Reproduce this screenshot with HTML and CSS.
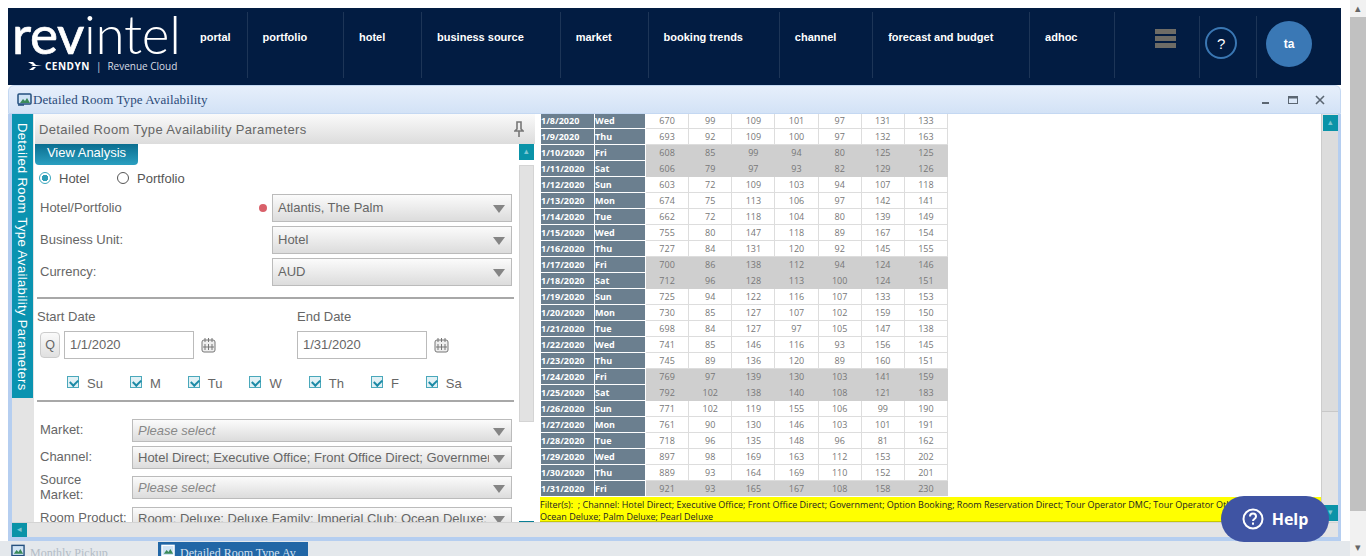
FILE: index.html
```html
<!DOCTYPE html>
<html lang="en">
<head>
    <meta charset="UTF-8">
    <title>Detailed Room Type Availability</title>
    <link rel="stylesheet" href="styles.css">
</head>
<body>
<div class="page">
    <div class="main">
        <div class="top">
            <header class="header">
                <div class="logo">
                    <div class="logo-word"><b>rev</b>intel</div>
                    <div class="logo-sub">
                        <svg width="14" height="10" viewBox="0 0 14 10"><path d="M0 1h5l3 3h6l-6 1H3l2-1zM1 9h4l3-3h-3z" fill="#fff"/></svg>
                        <b>CENDYN</b><span class="logo-bar">|</span><span>Revenue Cloud</span>
                    </div>
                </div>
                <nav class="nav">
                    <a>portal</a><a>portfolio</a><a>hotel</a><a>business source</a><a>market</a><a>booking trends</a><a>channel</a><a>forecast and budget</a><a>adhoc</a>
                </nav>
                <div class="head-cell menu-cell"><div class="burger"><i></i><i></i><i></i></div></div>
                <div class="head-cell help-cell"><div class="q-circle">?</div></div>
                <div class="head-cell user-cell"><div class="avatar">ta</div></div>
            </header>

            <section class="window">
                <div class="titlebar">
                    <svg class="win-icon" width="15" height="13" viewBox="0 0 15 13"><rect x="1" y="1" width="13" height="10" rx="1" fill="#cfe3f5" stroke="#24507f" stroke-width="1.5"/><path d="M3 10l3-4 2 2 2-3 3 5z" fill="#3b8a5a"/><path d="M1 12h6" stroke="#24507f" stroke-width="1.5"/></svg>
                    <span class="win-title">Detailed Room Type Availability</span>
                    <div class="win-btns">
                        <svg width="10" height="10" viewBox="0 0 10 10"><rect x="1" y="7" width="7" height="2" fill="#5b6672"/></svg>
                        <svg width="10" height="10" viewBox="0 0 10 10"><rect x="0.5" y="1.5" width="9" height="7" fill="none" stroke="#5b6672"/><rect y="1" width="10" height="2.5" fill="#5b6672"/></svg>
                        <svg width="10" height="10" viewBox="0 0 10 10"><path d="M1 1l8 8M9 1l-8 8" stroke="#5b6672" stroke-width="1.6"/></svg>
                    </div>
                </div>

                <div class="win-body">
                    <div class="panes">
                        <aside class="rail">
                            <div class="rail-tab"><span>Detailed Room Type Availability Parameters</span></div>
                        </aside>

                        <div class="params">
                            <div class="params-head">
                                <span>Detailed Room Type Availability Parameters</span>
                                <svg width="10" height="16" viewBox="0 0 10 16"><path d="M3 1h4v7l2 2H1l2-2zM5 10v6" fill="none" stroke="#777" stroke-width="1.6"/></svg>
                            </div>
                            <div class="params-body">
                                <div class="form">
                                    <button class="view-btn">View Analysis</button>
                                    <div class="radios">
                                        <label class="radio-item"><i class="radio on"></i>Hotel</label>
                                        <label class="radio-item"><i class="radio"></i>Portfolio</label>
                                    </div>
                                    <div class="field">
                                        <label>Hotel/Portfolio</label><i class="req"></i>
                                        <div class="select">Atlantis, The Palm</div>
                                    </div>
                                    <div class="field">
                                        <label>Business Unit:</label>
                                        <div class="select">Hotel</div>
                                    </div>
                                    <div class="field">
                                        <label>Currency:</label>
                                        <div class="select">AUD</div>
                                    </div>
                                    <hr class="rule">
                                    <div class="dates">
                                        <div class="date-col">
                                            <div class="date-label">Start Date</div>
                                            <div class="date-row">
                                                <button class="q-btn">Q</button>
                                                <div class="date-input">1/1/2020</div>
                                                <svg class="cal" width="15" height="15" viewBox="0 0 15 15"><rect x="1" y="2" width="13" height="12" rx="2" fill="#eee" stroke="#777"/><path d="M4 0v4M7.500 0v4M11 0v4M4 6v6M7.500 6v6M11 6v6M2 9h11" stroke="#777"/></svg>
                                            </div>
                                        </div>
                                        <div class="date-col">
                                            <div class="date-label">End Date</div>
                                            <div class="date-row">
                                                <div class="date-input">1/31/2020</div>
                                                <svg class="cal" width="15" height="15" viewBox="0 0 15 15"><rect x="1" y="2" width="13" height="12" rx="2" fill="#eee" stroke="#777"/><path d="M4 0v4M7.500 0v4M11 0v4M4 6v6M7.500 6v6M11 6v6M2 9h11" stroke="#777"/></svg>
                                            </div>
                                        </div>
                                    </div>
                                    <div class="days">
                                        <label class="day"><i class="check"></i>Su</label>
                                        <label class="day"><i class="check"></i>M</label>
                                        <label class="day"><i class="check"></i>Tu</label>
                                        <label class="day"><i class="check"></i>W</label>
                                        <label class="day"><i class="check"></i>Th</label>
                                        <label class="day"><i class="check"></i>F</label>
                                        <label class="day"><i class="check"></i>Sa</label>
                                    </div>
                                    <hr class="rule rule-days">
                                    <div class="small-field market-field">
                                        <label>Market:</label>
                                        <div class="select select-sm empty">Please select</div>
                                    </div>
                                    <div class="small-field">
                                        <label>Channel:</label>
                                        <div class="select select-sm"><span class="clip">Hotel Direct; Executive Office; Front Office Direct; Government; Option Booking</span></div>
                                    </div>
                                    <div class="small-field source-field">
                                        <label>Source<br>Market:</label>
                                        <div class="select select-sm empty">Please select</div>
                                    </div>
                                    <div class="small-field room-field">
                                        <label>Room Product:</label>
                                        <div class="select select-sm"><span class="clip">Room: Deluxe; Deluxe Family; Imperial Club; Ocean Deluxe; Palm Deluxe</span></div>
                                    </div>
                                </div>
                                <div class="form-scroll">
                                    <div class="teal-btn">&#9652;</div>
                                    <div class="form-thumb"></div>
                                    <div class="form-scroll-end"></div>
                                </div>
                            </div>
                        </div>

                        <div class="results">
                            <div class="results-main">
                                <div class="table-wrap">
                                    <table class="grid">
                                        <tr><th>1/8/2020</th><th>Wed</th><td>670</td><td>99</td><td>109</td><td>101</td><td>97</td><td>131</td><td>133</td></tr>
                                        <tr><th>1/9/2020</th><th>Thu</th><td>693</td><td>92</td><td>109</td><td>100</td><td>97</td><td>132</td><td>163</td></tr>
                                        <tr class="wknd"><th>1/10/2020</th><th>Fri</th><td>608</td><td>85</td><td>99</td><td>94</td><td>80</td><td>125</td><td>125</td></tr>
                                        <tr class="wknd"><th>1/11/2020</th><th>Sat</th><td>606</td><td>79</td><td>97</td><td>93</td><td>82</td><td>129</td><td>126</td></tr>
                                        <tr><th>1/12/2020</th><th>Sun</th><td>603</td><td>72</td><td>109</td><td>103</td><td>94</td><td>107</td><td>118</td></tr>
                                        <tr><th>1/13/2020</th><th>Mon</th><td>674</td><td>75</td><td>113</td><td>106</td><td>97</td><td>142</td><td>141</td></tr>
                                        <tr><th>1/14/2020</th><th>Tue</th><td>662</td><td>72</td><td>118</td><td>104</td><td>80</td><td>139</td><td>149</td></tr>
                                        <tr><th>1/15/2020</th><th>Wed</th><td>755</td><td>80</td><td>147</td><td>118</td><td>89</td><td>167</td><td>154</td></tr>
                                        <tr><th>1/16/2020</th><th>Thu</th><td>727</td><td>84</td><td>131</td><td>120</td><td>92</td><td>145</td><td>155</td></tr>
                                        <tr class="wknd"><th>1/17/2020</th><th>Fri</th><td>700</td><td>86</td><td>138</td><td>112</td><td>94</td><td>124</td><td>146</td></tr>
                                        <tr class="wknd"><th>1/18/2020</th><th>Sat</th><td>712</td><td>96</td><td>128</td><td>113</td><td>100</td><td>124</td><td>151</td></tr>
                                        <tr><th>1/19/2020</th><th>Sun</th><td>725</td><td>94</td><td>122</td><td>116</td><td>107</td><td>133</td><td>153</td></tr>
                                        <tr><th>1/20/2020</th><th>Mon</th><td>730</td><td>85</td><td>127</td><td>107</td><td>102</td><td>159</td><td>150</td></tr>
                                        <tr><th>1/21/2020</th><th>Tue</th><td>698</td><td>84</td><td>127</td><td>97</td><td>105</td><td>147</td><td>138</td></tr>
                                        <tr><th>1/22/2020</th><th>Wed</th><td>741</td><td>85</td><td>146</td><td>116</td><td>93</td><td>156</td><td>145</td></tr>
                                        <tr><th>1/23/2020</th><th>Thu</th><td>745</td><td>89</td><td>136</td><td>120</td><td>89</td><td>160</td><td>151</td></tr>
                                        <tr class="wknd"><th>1/24/2020</th><th>Fri</th><td>769</td><td>97</td><td>139</td><td>130</td><td>103</td><td>141</td><td>159</td></tr>
                                        <tr class="wknd"><th>1/25/2020</th><th>Sat</th><td>792</td><td>102</td><td>138</td><td>140</td><td>108</td><td>121</td><td>183</td></tr>
                                        <tr><th>1/26/2020</th><th>Sun</th><td>771</td><td>102</td><td>119</td><td>155</td><td>106</td><td>99</td><td>190</td></tr>
                                        <tr><th>1/27/2020</th><th>Mon</th><td>761</td><td>90</td><td>130</td><td>146</td><td>103</td><td>101</td><td>191</td></tr>
                                        <tr><th>1/28/2020</th><th>Tue</th><td>718</td><td>96</td><td>135</td><td>148</td><td>96</td><td>81</td><td>162</td></tr>
                                        <tr><th>1/29/2020</th><th>Wed</th><td>897</td><td>98</td><td>169</td><td>163</td><td>112</td><td>153</td><td>202</td></tr>
                                        <tr><th>1/30/2020</th><th>Thu</th><td>889</td><td>93</td><td>164</td><td>169</td><td>110</td><td>152</td><td>201</td></tr>
                                        <tr class="wknd"><th>1/31/2020</th><th>Fri</th><td>921</td><td>93</td><td>165</td><td>167</td><td>108</td><td>158</td><td>230</td></tr>
                                    </table>
                                </div>
                                <div class="filter">Filter(s): &nbsp;; Channel: Hotel Direct; Executive Office; Front Office Direct; Government; Option Booking; Room Reservation Direct; Tour Operator DMC; Tour Operator Other<br>Ocean Deluxe; Palm Deluxe; Pearl Deluxe</div>
                            </div>
                            <div class="res-scroll">
                                <div class="teal-btn">&#9652;</div>
                                <div class="res-thumb"></div>
                                <div class="teal-btn res-down">&#9662;</div>
                            </div>
                        </div>
                    </div>
                    <div class="hbar"><div class="teal-btn">&#9666;</div></div>
                </div>
            </section>
        </div>

        <footer class="tabs">
            <div class="tab">
                <svg width="14" height="13" viewBox="0 0 15 13"><rect x="1" y="1" width="13" height="11" fill="#cfe3f5" stroke="#24507f" stroke-width="1.500"/><path d="M3 10l3-4 2 2 2-3 3 5z" fill="#3b8a5a"/></svg>
                <span>Monthly Pickup</span>
            </div>
            <div class="tab active">
                <svg width="14" height="13" viewBox="0 0 15 13"><rect x="1" y="1" width="13" height="11" fill="#cfe3f5" stroke="#fff" stroke-width="1.500"/><path d="M3 10l3-4 2 2 2-3 3 5z" fill="#3b8a5a"/></svg>
                <span>Detailed Room Type Av</span>
            </div>
        </footer>
    </div>

    <div class="page-scroll">
        <div class="page-arrow">&#9652;</div>
        <div class="page-thumb"></div>
        <div class="page-arrow">&#9662;</div>
    </div>
</div>

<div class="help-fab">
    <svg width="22" height="22" viewBox="0 0 22 22"><circle cx="11" cy="11" r="9.500" fill="none" stroke="#fff" stroke-width="2"/><path d="M8 8.500c0-4 6-4 6 0 0 2.500-3 2.500-3 4.500" fill="none" stroke="#fff" stroke-width="2"/><rect x="10" y="14.500" width="2" height="2.200" fill="#fff"/></svg>
    <span>Help</span>
</div>
</body>
</html>
```

FILE: styles.css
```css
* {
    box-sizing: border-box;
}

html, body {
    margin: 0;
    height: 100%;
    overflow: hidden;
    background: #fff;
    font-family: "Liberation Sans", Arial, sans-serif;
    color: #666;
}

.page {
    display: flex;
    height: 556px;
}

.main {
    width: 1350px;
    display: flex;
    flex-direction: column;
}

.top {
    padding: 8px 9px 0 8px;
}

/* header */
.header {
    display: flex;
    height: 77px;
    background: #021c42;
}

.logo {
    width: 176px;
    padding: 0 0 0 4px;
    color: #fff;
    flex: none;
}

.logo-word {
    font-family: "Lato", sans-serif;
    font-size: 53px;
    font-weight: 300;
    line-height: 50px;
    margin-top: 1px;
    white-space: nowrap;
    letter-spacing: -0.3px;
}

.logo-word b {
    font-weight: 400;
    -webkit-text-stroke: 0.7px #fff;
}

.logo-sub {
    display: flex;
    align-items: center;
    gap: 3px;
    margin: 0 0 0 16px;
    font-family: "Open Sans", sans-serif;
    font-size: 10px;
    white-space: nowrap;
    color: #d8dde5;
}

.logo-sub b {
    font-size: 10px;
    letter-spacing: 0.5px;
    color: #fff;
}

.logo-bar {
    margin: 0 3px;
}

.nav {
    display: flex;
    margin: 4px 0 7px 1px;
}

.nav a {
    padding: 19px 35.800px 0 15px;
    border-right: 1px solid #1d3557;
    color: #fff;
    font-size: 11px;
    font-weight: bold;
    white-space: nowrap;
}

.nav a:first-child {
    padding-right: 16px;
}

.nav a:last-child {
    width: 85px;
    padding-right: 0;
}

.head-cell {
    display: flex;
    margin: 8px 0 7px;
    border-right: 1px solid #1d3557;
}

.menu-cell {
    width: 85px;
    padding-left: 40px;
}

.help-cell {
    width: 57px;
    padding-left: 5px;
}

.user-cell {
    flex: 1;
    padding-left: 9px;
    border-right: 0;
}

.burger {
    width: 21px;
    margin-top: 13px;
    display: flex;
    flex-direction: column;
    gap: 2px;
}

.burger i {
    height: 5px;
    background: #6e6c66;
}

.q-circle {
    width: 32px;
    height: 32px;
    margin-top: 11px;
    border: 2px solid #3a77b3;
    border-radius: 50%;
    color: #fff;
    font-size: 15px;
    line-height: 29px;
    text-align: center;
}

.avatar {
    width: 46px;
    height: 46px;
    margin-top: 5px;
    border-radius: 50%;
    background: #3a78b5;
    color: #fff;
    font-size: 12px;
    font-weight: bold;
    line-height: 46px;
    text-align: center;
}

/* window */
.window {
    height: 456px;
    display: flex;
    flex-direction: column;
}

.titlebar {
    display: flex;
    align-items: center;
    height: 29px;
    flex: none;
    padding: 0 15px 0 8px;
    background: linear-gradient(#e6effb, #d3e2f6);
    border: 1px solid #c4d8f2;
    border-radius: 6px 6px 0 0;
}

.win-icon {
    flex: none;
}

.win-title {
    margin-left: 1px;
    font-family: "Liberation Serif", serif;
    font-size: 13px;
    letter-spacing: 0.1px;
    color: #2b4a78;
}

.win-btns {
    display: flex;
    gap: 17px;
    margin-left: auto;
}

.win-body {
    flex: 1;
    min-height: 0;
    display: flex;
    flex-direction: column;
    background: #e4e4e4;
    border: solid #b5cef0;
    border-width: 0 3px 4px 4px;
}

.panes {
    height: 408px;
    display: flex;
    flex: none;
}

.rail {
    width: 23px;
    flex: none;
    background: #e4e4e4;
    border-right: 1px solid #fff;
}

.rail-tab {
    height: 284px;
    padding-top: 9px;
    background: #0a93b0;
    color: #fff;
    font-size: 13px;
    letter-spacing: 0.36px;
    line-height: 21px;
    writing-mode: vertical-rl;
    white-space: nowrap;
}

/* parameters panel */
.params {
    width: 500px;
    flex: none;
    display: flex;
    flex-direction: column;
    background: #fff;
}

.params-head {
    display: flex;
    align-items: center;
    justify-content: space-between;
    height: 30px;
    flex: none;
    padding: 0 11px 0 4px;
    background: linear-gradient(#fafafa, #dcdcdc);
    font-size: 13px;
    letter-spacing: 0.36px;
    color: #666;
}

.params-body {
    flex: 1;
    min-height: 0;
    display: flex;
    overflow: hidden;
}

.form {
    width: 484px;
    flex: none;
    overflow: hidden;
}

.view-btn {
    display: block;
    width: 103px;
    height: 21px;
    padding: 0 0 5px;
    border: 0;
    border-radius: 0 0 4px 4px;
    background: linear-gradient(#0b6e90, #2a9fc0);
    color: #fff;
    font-family: inherit;
    font-size: 13px;
    font-weight: normal;
}

.radios {
    display: flex;
    height: 16px;
    margin: 5px 0 8px 4px;
    font-size: 13px;
    color: #555;
}

.radio-item {
    display: flex;
    align-items: center;
    gap: 8px;
    width: 78px;
}

.radio {
    width: 12px;
    height: 12px;
    border: 1px solid #555;
    border-radius: 50%;
    background: #fff;
}

.radio.on {
    border-color: #3aa6bd;
    background: radial-gradient(circle, #2c9db6 0 3px, #fff 3.500px);
}

.field {
    display: flex;
    align-items: center;
    height: 28px;
    margin: 0 7px 4px 5px;
    font-size: 13px;
}

.field label {
    flex: 1;
    padding-bottom: 2px;
}

.req {
    width: 8px;
    height: 8px;
    margin-right: 5px;
    border-radius: 50%;
    background: #d9606a;
}

.select {
    position: relative;
    width: 240px;
    height: 28px;
    padding: 0 30px 0 5px;
    border: 1px solid #bbb;
    background: linear-gradient(#fbfbfb, #dcdcdc);
    color: #666;
    font-size: 13px;
    line-height: 26px;
    white-space: nowrap;
}

.select::after {
    content: "";
    position: absolute;
    right: 6px;
    top: 10px;
    border: 6px solid transparent;
    border-top: 8px solid #858585;
    border-bottom: 0;
}

.rule {
    height: 2px;
    margin: 11px 5px 0 2px;
    border: 0;
    background: #a8a8a8;
}

.dates {
    display: flex;
    margin: 10px 0 0 2px;
}

.date-col {
    width: 260px;
    flex: none;
}

.date-label {
    height: 16px;
    font-size: 13px;
    line-height: 16px;
    color: #666;
}

.date-row {
    display: flex;
    align-items: center;
    margin-top: 6px;
}

.q-btn {
    width: 20px;
    height: 26px;
    margin: 0 4px 0 3px;
    padding: 0;
    border: 1px solid #ccc;
    border-radius: 4px;
    background: linear-gradient(#fafafa, #e0e0e0);
    color: #666;
    font-family: inherit;
    font-size: 12.500px;
}

.date-input {
    height: 28px;
    width: 130px;
    padding-left: 5px;
    border: 1px solid #bbb;
    color: #666;
    font-size: 13px;
    line-height: 26px;
}

.cal {
    margin-left: 7px;
}

.days {
    display: flex;
    gap: 27px;
    margin: 17px 0 0 32px;
    font-size: 13px;
    color: #666;
}

.day {
    display: flex;
    align-items: center;
    gap: 8px;
}

.check {
    position: relative;
    width: 12px;
    height: 12px;
    margin-top: -3px;
    border: 1px solid #4aa8bb;
    background: #e2f1f5;
}

.check::after {
    content: "";
    position: absolute;
    left: 3px;
    top: 1px;
    width: 4px;
    height: 6px;
    border: solid #1c8aa6;
    border-width: 0 2px 2px 0;
    transform: rotate(45deg);
}

.rule-days {
    margin-top: 9px;
}

.small-field {
    display: flex;
    align-items: center;
    height: 23px;
    margin: 4px 7px 0 5px;
    font-size: 13px;
}

.small-field label {
    width: 92px;
    flex: none;
    padding-bottom: 2px;
    line-height: 15px;
    white-space: nowrap;
}

.market-field {
    margin-top: 17px;
}

.source-field {
    margin-top: 7px;
}

.room-field {
    margin-top: 8px;
}

.select-sm {
    flex: 1;
    width: auto;
    min-width: 0;
    height: 23px;
    line-height: 21px;
    padding-right: 22px;
}

.select-sm::after {
    top: 8px;
}

.clip {
    display: block;
    overflow: hidden;
}

.empty {
    font-style: italic;
    color: #888;
}

.form-scroll {
    width: 15px;
    flex: none;
    display: flex;
    flex-direction: column;
}

.teal-btn {
    width: 15px;
    height: 16px;
    flex: none;
    background: #0a93a8;
    color: #7cc6d2;
    font-size: 9px;
    line-height: 15px;
    text-align: center;
}

.form-thumb {
    height: 257px;
    margin-top: 5px;
    background: #e2e2e2;
    border: 1px solid #d4d4d4;
}

.form-scroll-end {
    height: 1px;
    margin-top: auto;
    background: #0a7f95;
}

/* results pane */
.results {
    flex: 1;
    min-width: 0;
    display: flex;
    background: #fff;
}

.results-main {
    flex: 1;
    min-width: 0;
    display: flex;
    flex-direction: column;
    padding-left: 5px;
}

.table-wrap {
    height: 382px;
    flex: none;
    overflow: hidden;
}

.grid {
    margin-top: -2px;
    border-collapse: collapse;
    table-layout: fixed;
    width: 408px;
    font-family: "Open Sans", sans-serif;
    font-size: 9px;
}

.grid tr {
    height: 16px;
}

.grid th {
    padding: 0;
    background: #6b7f8f;
    border: 1px solid #fff;
    color: #fff;
    font-weight: bold;
    text-align: left;
    line-height: 14px;
}

.grid th:first-child {
    width: 54px;
}

.grid th:nth-child(2) {
    width: 51px;
}

.grid td {
    padding: 0;
    border: 1px solid #ddd;
    color: #777;
    text-align: center;
    line-height: 14px;
}

.wknd td {
    background: #cfcfcf;
    border-color: #cfcfcf;
}

.filter {
    height: 25px;
    margin-top: 1px;
    padding-top: 2px;
    background: #ffff00;
    color: #222;
    font-family: "Open Sans", sans-serif;
    font-size: 9px;
    line-height: 11.500px;
    white-space: nowrap;
    overflow: hidden;
    border-bottom: 1px solid #c8c800;
}

.res-scroll {
    width: 17px;
    flex: none;
    display: flex;
    flex-direction: column;
    align-items: center;
    padding-top: 1px;
    background: #e4e4e4;
    border-left: 1px solid #ccc;
}

.res-thumb {
    width: 100%;
    height: 281px;
    background: #dcdcdc;
    border-bottom: 1px solid #c8c8c8;
}

.res-down {
    margin-top: auto;
    margin-bottom: 1px;
}

.hbar {
    height: 15px;
    flex: none;
    background: #e4e4e4;
    border-top: 1px solid #d4d4d4;
}

.hbar .teal-btn {
    height: 14px;
    line-height: 13px;
}

/* bottom tabs */
.tabs {
    flex: 1;
    display: flex;
    overflow: hidden;
    padding: 1px 0 0 11px;
    background: #e4e8ec;
    font-family: "Liberation Serif", serif;
    font-size: 12px;
}

.tab {
    display: flex;
    align-items: flex-start;
    gap: 5px;
    width: 147px;
    color: #b3bcc6;
    white-space: nowrap;
}

.tab span {
    padding-top: 4px;
}

.tab svg {
    margin-top: 2px;
}

.tab.active {
    width: 150px;
    padding-left: 3px;
    background: #2166a6;
    color: #d5e2f0;
}

/* page scrollbar */
.page-scroll {
    width: 16px;
    flex: none;
    display: flex;
    flex-direction: column;
    background: #f1f1f1;
}

.page-arrow {
    height: 17px;
    color: #666;
    font-size: 11px;
    line-height: 17px;
    text-align: center;
}

.page-thumb {
    height: 494px;
    background: #c1c1c1;
}

.page-arrow:last-child {
    margin-top: auto;
}

/* help button, sits over the page */
.help-fab {
    position: fixed;
    left: 1221px;
    top: 496px;
    display: flex;
    align-items: center;
    justify-content: center;
    gap: 8px;
    width: 108px;
    height: 46px;
    border-radius: 23px;
    background: #3f54a3;
    color: #fff;
    font-family: "Open Sans", sans-serif;
    font-size: 16px;
    font-weight: bold;
}
```
